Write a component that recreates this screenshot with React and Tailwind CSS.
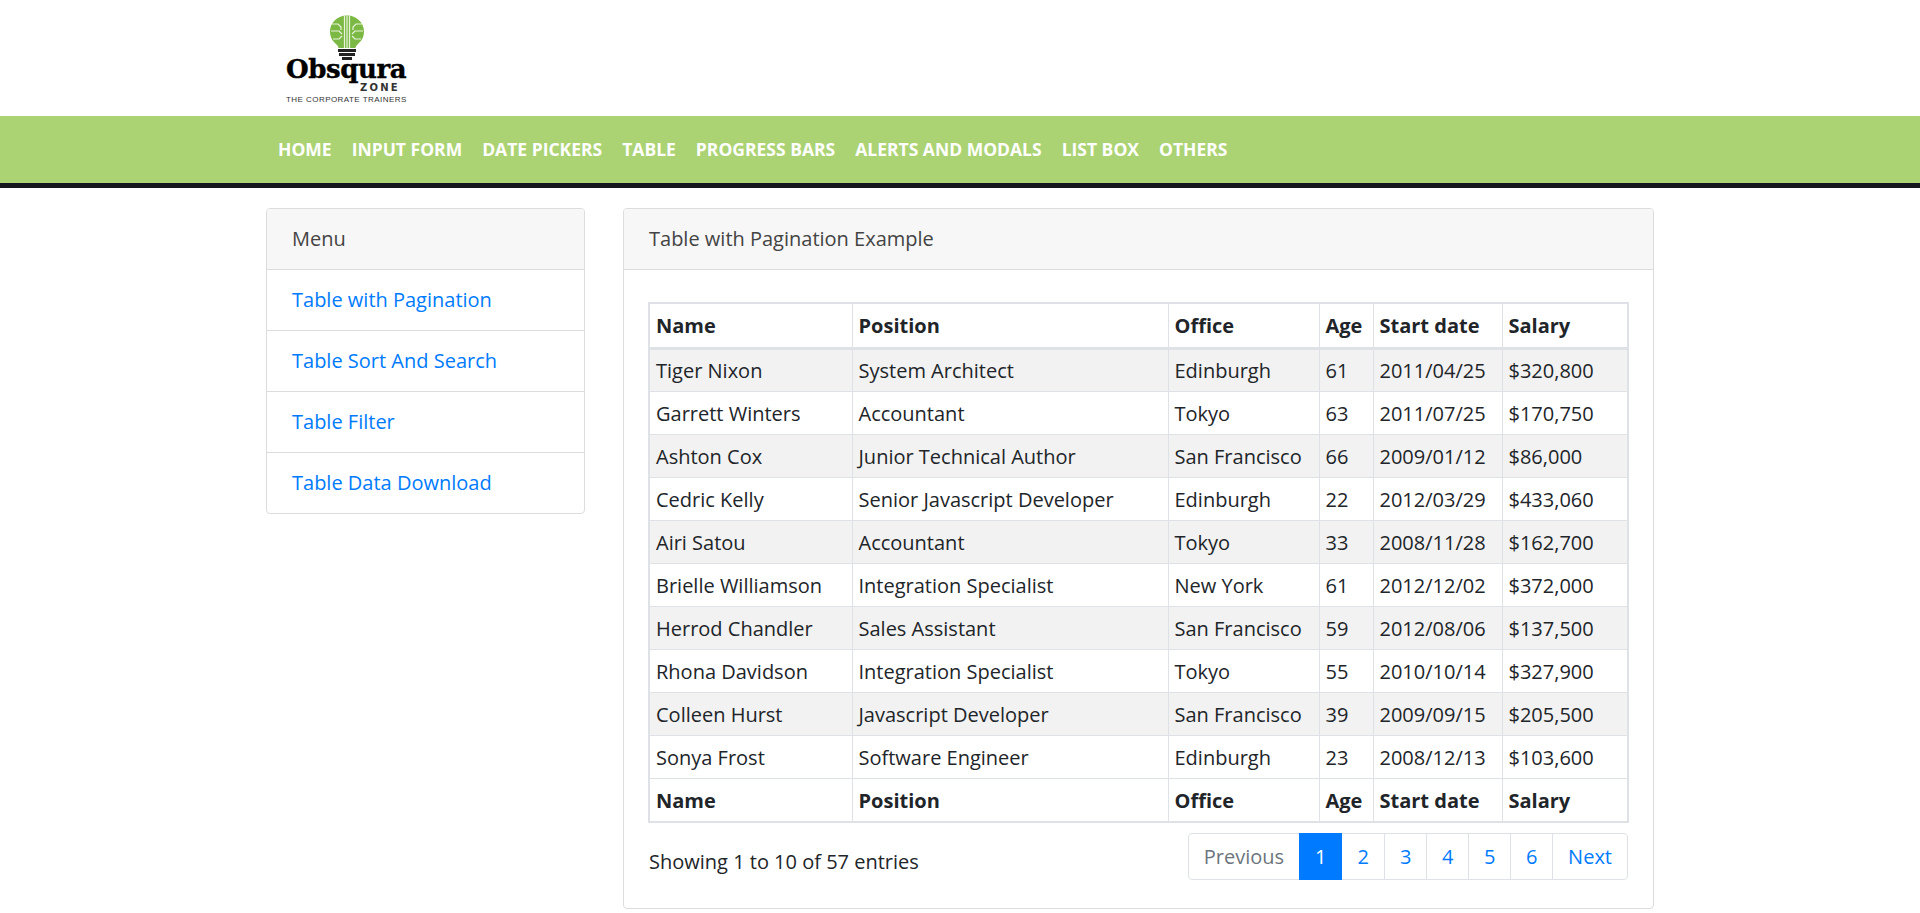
const FONT = "font-['Open_Sans',sans-serif]";
const rows = [
  ["Tiger Nixon","System Architect","Edinburgh","61","2011/04/25","$320,800"],
  ["Garrett Winters","Accountant","Tokyo","63","2011/07/25","$170,750"],
  ["Ashton Cox","Junior Technical Author","San Francisco","66","2009/01/12","$86,000"],
  ["Cedric Kelly","Senior Javascript Developer","Edinburgh","22","2012/03/29","$433,060"],
  ["Airi Satou","Accountant","Tokyo","33","2008/11/28","$162,700"],
  ["Brielle Williamson","Integration Specialist","New York","61","2012/12/02","$372,000"],
  ["Herrod Chandler","Sales Assistant","San Francisco","59","2012/08/06","$137,500"],
  ["Rhona Davidson","Integration Specialist","Tokyo","55","2010/10/14","$327,900"],
  ["Colleen Hurst","Javascript Developer","San Francisco","39","2009/09/15","$205,500"],
  ["Sonya Frost","Software Engineer","Edinburgh","23","2008/12/13","$103,600"],
];
const heads = ["Name","Position","Office","Age","Start date","Salary"];
const nav = ["HOME","INPUT FORM","DATE PICKERS","TABLE","PROGRESS BARS","ALERTS AND MODALS","LIST BOX","OTHERS"];
const menu = ["Table with Pagination","Table Sort And Search","Table Filter","Table Data Download"];
const widths = ["w-[203px]","w-[316px]","w-[151px]","w-[54px]","w-[129px]","w-[126px]"];

function Logo() {
  return (
    <div className="relative w-[128px] h-[100px]">
      <svg className="absolute left-[63px] top-[14px]" width="36" height="46" viewBox="0 0 36 46">
        <path d="M18 0.5C8.500 0.5 1 7.500 1 16.500c0 6 3 10 6.500 13 1.500 1.500 2 2.500 2 3.500h17c0-1 .5-2 2-3.500 3.500-3 6.500-7 6.500-13C35 7.500 27.500 0.500 18 0.500Z" fill="#7cb944" />
        <path d="M15.500 1v32M18 1v32M20.500 1v32M3 9h6l3 3v3M2 16h8l3 3M4 24h6l3-3M33 9h-6l-3 3v3M34 16h-8l-3 3M32 24h-6l-3-3" stroke="#e8f3dc" strokeWidth="1.2" fill="none" />
        <path d="M9 34h18v3H9zM10 38h16v3H10z" fill="#222" />
        <path d="M13 42h10v3H13z" fill="#222" />
      </svg>
      <span className="absolute left-[20px] top-[52px] font-['DejaVu_Serif',serif] font-bold text-[26px] leading-[32px] tracking-[-0.4px] text-black whitespace-nowrap [-webkit-text-stroke:0.4px_#000]">Obsqura</span>
      <span className="absolute left-[94px] top-[81px] font-['DejaVu_Sans',sans-serif] font-bold text-[10px] leading-[11px] tracking-[2.2px] text-[#333] whitespace-nowrap">ZONE</span>
      <span className="absolute left-[20px] top-[94px] font-['Liberation_Sans',sans-serif] text-[8px] leading-[9px] tracking-[0.45px] text-[#333] whitespace-nowrap">THE CORPORATE TRAINERS</span>
    </div>
  );
}

function HeadRow({ heavy }) {
  return (
    <tr className={heavy ? "h-[45px]" : "h-[44px]"}>
      {heads.map((h, i) => (
        <th key={h} className={`${widths[i]} border border-[#dee2e6] ${heavy ? "border-b-[3px] pt-[2px]" : "border-b-2 pt-[3px]"} px-[6px] pb-0 text-left font-bold text-[#212529] whitespace-nowrap`}>{h}</th>
      ))}
    </tr>
  );
}

export default function App() {
  return (
    <div className={`${FONT} bg-white text-[20px] text-[#212529] min-h-[913px]`}>
      <header className="h-[116px] pl-[266px] pt-[1px]">
        <Logo />
      </header>
      <nav className="h-[72px] bg-[#abd373] border-b-[5px] border-[#15161c] pl-[278px] flex items-center gap-[20px]">
        {nav.map((n) => (
          <a key={n} className="text-white font-bold text-[17.5px] leading-none whitespace-nowrap">{n}</a>
        ))}
      </nav>
      <main className="mx-[266px] mt-[20px] flex gap-[38px] items-start">
        <aside className="w-[319px] shrink-0 border border-[#dcdcdc] rounded-[4px] overflow-hidden">
          <div className="h-[61px] bg-[#f7f7f7] border-b border-[#dcdcdc] px-[25px] flex items-center text-[#444]">Menu</div>
          {menu.map((m, i) => (
            <div key={m} className={`${i < 3 ? "h-[61px] border-b border-[#dcdcdc]" : "h-[60px]"} px-[25px] flex items-center text-[#007bff]`}>{m}</div>
          ))}
        </aside>
        <section className="flex-1 border border-[#dcdcdc] rounded-[4px] overflow-hidden">
          <div className="h-[61px] bg-[#f7f7f7] border-b border-[#dcdcdc] px-[25px] flex items-center text-[#444]">Table with Pagination Example</div>
          <div className="pl-[24px] pr-[25px] pt-[32px] pb-[28px]">
            <table className="w-full table-fixed border-collapse border-2 border-[#dee2e6]">
              <thead><HeadRow heavy /></thead>
              <tbody>
                {rows.map((r, ri) => (
                  <tr key={r[0]} className={`h-[43px] ${ri % 2 === 0 ? "bg-[#f2f2f2]" : "bg-white"}`}>
                    {r.map((c, i) => (
                      <td key={i} className="border border-[#dee2e6] px-[6px] pt-[2px] pb-0 whitespace-nowrap">{c}</td>
                    ))}
                  </tr>
                ))}
              </tbody>
              <tfoot><HeadRow /></tfoot>
            </table>
            <div className="flex justify-between items-start mt-[10px]">
              <div className="pl-[1px] pt-[14px] leading-[30px]">Showing 1 to 10 of 57 entries</div>
              <div className="flex h-[47px] border border-[#dee2e6] rounded-[4px] text-[#007bff]">
                <span className="px-[15px] flex items-center text-[#6c757d]">Previous</span>
                <span className="w-[43px] -my-px flex items-center justify-center bg-[#007bff] text-white">1</span>
                {["2","3","4","5","6"].map((p, i) => (
                  <span key={p} className={`w-[42px] flex items-center justify-center ${i > 0 ? "border-l border-[#dee2e6]" : ""}`}>{p}</span>
                ))}
                <span className="px-[15px] flex items-center border-l border-[#dee2e6]">Next</span>
              </div>
            </div>
          </div>
        </section>
      </main>
    </div>
  );
}
